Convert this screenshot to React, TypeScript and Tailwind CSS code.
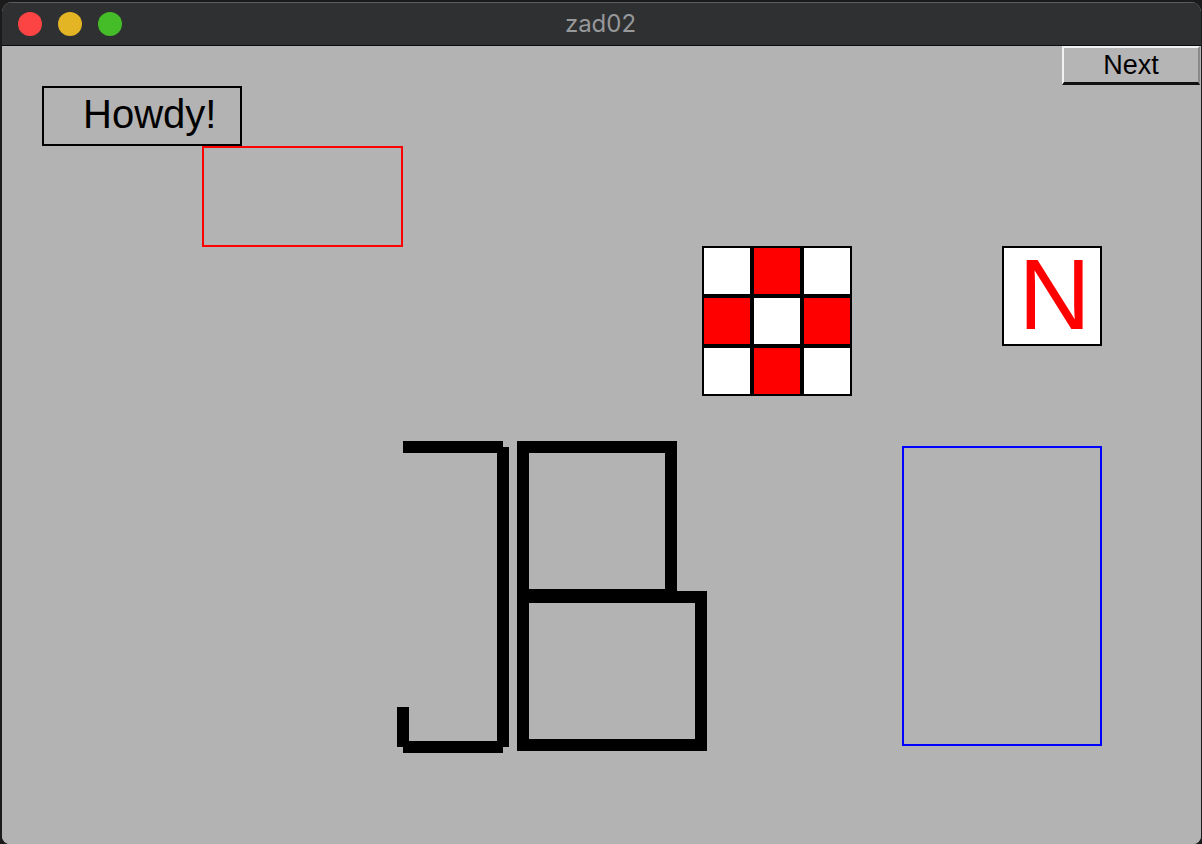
import React from "react";

const cells = [false, true, false, true, false, true, false, true, false];

function TrafficLights() {
  return (
    <div className="flex items-center gap-[16px] pl-[16px]">
      <span className="h-[24px] w-[24px] rounded-full bg-[#fd4444]" />
      <span className="h-[24px] w-[24px] rounded-full bg-[#e3b524]" />
      <span className="h-[24px] w-[24px] rounded-full bg-[#45bd28]" />
    </div>
  );
}

function Checker() {
  return (
    <div className="absolute left-[700px] top-[200px] grid w-[150px] grid-cols-3">
      {cells.map((red, i) => (
        <div
          key={i}
          className={
            red
              ? "h-[50px] w-[50px] border-2 border-black bg-[#ff0000]"
              : "h-[50px] w-[50px] border-2 border-black bg-white"
          }
        />
      ))}
    </div>
  );
}

// J and B drawn with thick strokes
function Initials() {
  return (
    <svg
      className="absolute left-[395px] top-[395px]"
      width="310"
      height="312"
      viewBox="0 0 310 312"
    >
      <rect x="6" y="0" width="100" height="12" fill="#000" />
      <rect x="100" y="6" width="12" height="300" fill="#000" />
      <rect x="6" y="300" width="100" height="12" fill="#000" />
      <rect x="0" y="266" width="12" height="40" fill="#000" />
      <rect x="126" y="6" width="148" height="148" fill="none" stroke="#000" strokeWidth="12" />
      <rect x="126" y="156" width="178" height="148" fill="none" stroke="#000" strokeWidth="12" />
    </svg>
  );
}

export default function App() {
  return (
    <div className="flex h-[844px] w-[1202px] overflow-hidden bg-[#1b1b1b] pl-[2px] pt-[2px] font-['Liberation_Sans',Arial,sans-serif]">
      <div className="flex h-[842px] w-[1199px] flex-col overflow-hidden rounded-t-[10px] rounded-b-[8px] bg-[#b3b3b3]">
        {/* title bar */}
        <div className="relative flex h-[44px] items-center border-t border-b border-t-[#5b5d5f] border-b-[#0c0c0c] bg-[#2e3032]">
          <TrafficLights />
          <div className="absolute inset-0 flex items-center justify-center pr-[2px] font-['Inter','Noto_Sans',sans-serif] text-[24px] text-[#979899]">
            zad02
          </div>
        </div>

        {/* drawing surface */}
        <div className="relative flex-1 bg-[#b3b3b3]">
          <button className="absolute left-[1060px] top-0 flex h-[39px] w-[138px] items-center justify-center border-t-2 border-l-2 border-r-2 border-b-[3px] border-t-[#f2f2f2] border-l-[#f2f2f2] border-r-[#8a8a8a] border-b-[#111] bg-[#b5b5b5] pt-[1px] text-[27px] text-black">
            Next
          </button>

          <div className="absolute left-[40px] top-[40px] flex h-[60px] w-[200px] items-center border-2 border-black pb-[4px] pl-[39px] text-[40px] leading-[40px] text-black">
            Howdy!
          </div>

          <div className="absolute left-[200px] top-[100px] h-[101px] w-[201px] border-2 border-[#ff0000]" />

          <Checker />

          <div className="absolute left-[1000px] top-[200px] flex h-[100px] w-[100px] items-center justify-center border-2 border-black bg-white pb-[5px] pl-[5px] text-[100px] leading-[96px] text-[#ff0000]">
            N
          </div>

          <Initials />

          <div className="absolute left-[900px] top-[400px] h-[300px] w-[200px] border-2 border-[#0000ff]" />
        </div>
      </div>
    </div>
  );
}
